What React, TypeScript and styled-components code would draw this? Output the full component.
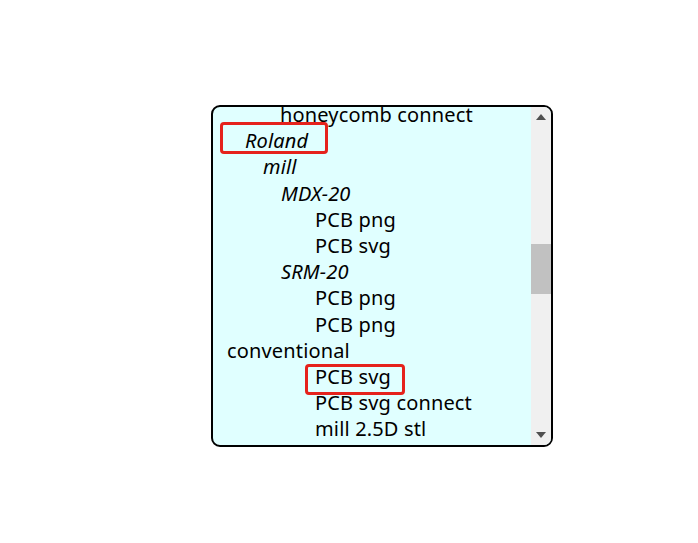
import React from "react";
import styled, { createGlobalStyle } from "styled-components";

const Global = createGlobalStyle`
  html, body { margin: 0; padding: 0; background: #fff; }
  body { font-family: "Noto Sans", "Open Sans", sans-serif; }
`;

const Page = styled.div`
  padding: 105px 0 0 211px;
`;

const Frame = styled.div`
  width: 342px;
  height: 342px;
  box-sizing: border-box;
  border: 2px solid #000;
  border-radius: 9px;
  overflow: hidden;
  display: flex;
  background: #e0ffff;
`;

const List = styled.div`
  flex: 1;
  overflow: hidden;
`;

const Content = styled.div<{ $offset: number }>`
  margin-top: ${(p) => -p.$offset}px;
`;

const Row = styled.div<{ $indent: number; $italic?: boolean }>`
  padding-left: ${(p) => p.$indent}px;
  font-size: 20px;
  letter-spacing: 0.15px;
  line-height: 26.2px;
  height: 26.2px;
  white-space: nowrap;
  font-style: ${(p) => (p.$italic ? "italic" : "normal")};
  color: #000;
`;

const Mark = styled.span<{ $l: number; $r: number; $t: number; $b: number }>`
  position: relative;
  display: inline-block;
  &::after {
    content: "";
    position: absolute;
    left: ${(p) => p.$l}px;
    right: ${(p) => p.$r}px;
    top: ${(p) => p.$t}px;
    bottom: ${(p) => p.$b}px;
    border: 3px solid #e5221c;
    border-radius: 4px;
  }
`;

const Bar = styled.div`
  width: 20px;
  flex: none;
  background: #f0f0f0;
  display: flex;
  flex-direction: column;
`;

const ArrowBtn = styled.div`
  height: 20px;
  flex: none;
  display: flex;
  align-items: center;
  justify-content: center;
`;

const Track = styled.div`
  flex: 1;
`;

const Thumb = styled.div<{ $top: number; $size: number }>`
  margin-top: ${(p) => p.$top}px;
  height: ${(p) => p.$size}px;
  background: #c1c1c1;
`;

type Item = {
  text: string;
  indent: number;
  italic?: boolean;
  mark?: { l: number; r: number; t: number; b: number };
};

const items: Item[] = [
  { text: "honeycomb connect", indent: 67 },
  { text: "Roland", indent: 32, italic: true, mark: { l: -25, r: -20, t: -6, b: 0 } },
  { text: "mill", indent: 50, italic: true },
  { text: "MDX-20", indent: 68, italic: true },
  { text: "PCB png", indent: 102 },
  { text: "PCB svg", indent: 102 },
  { text: "SRM-20", indent: 68, italic: true },
  { text: "PCB png", indent: 102 },
  { text: "PCB png", indent: 102 },
  { text: "conventional", indent: 14 },
  { text: "PCB svg", indent: 102, mark: { l: -10, r: -14, t: 0, b: -5 } },
  { text: "PCB svg connect", indent: 102 },
  { text: "mill 2.5D stl", indent: 102 },
];

const Up = () => (
  <svg width="10" height="6" viewBox="0 0 10 6">
    <path d="M0 6 L5 0 L10 6 Z" fill="#505050" />
  </svg>
);

const Down = () => (
  <svg width="10" height="6" viewBox="0 0 10 6">
    <path d="M0 0 L5 6 L10 0 Z" fill="#505050" />
  </svg>
);

export default function App() {
  return (
    <>
      <Global />
      <Page>
        <Frame>
          <List>
            <Content $offset={5}>
              {items.map((it, i) => (
                <Row key={i} $indent={it.indent} $italic={it.italic}>
                  {it.mark ? (
                    <Mark $l={it.mark.l} $r={it.mark.r} $t={it.mark.t} $b={it.mark.b}>
                      {it.text}
                    </Mark>
                  ) : (
                    it.text
                  )}
                </Row>
              ))}
            </Content>
          </List>
          <Bar>
            <ArrowBtn>
              <Up />
            </ArrowBtn>
            <Track>
              <Thumb $top={117} $size={50} />
            </Track>
            <ArrowBtn>
              <Down />
            </ArrowBtn>
          </Bar>
        </Frame>
      </Page>
    </>
  );
}
